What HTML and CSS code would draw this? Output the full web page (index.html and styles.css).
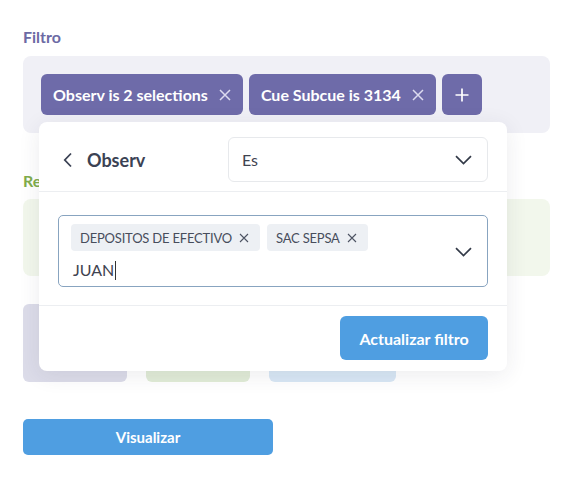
FILE: index.html
```html
<!DOCTYPE html>
<html lang="es">
<head>
<meta charset="utf-8">
<title>Filtro</title>
<link rel="stylesheet" href="styles.css">
</head>
<body>
<div class="page">
  <div class="section-label label-filter">Filtro</div>
  <div class="filter-box">
    <div class="chip">Observ is 2 selections
      <svg class="chip-x" width="12" height="12" viewBox="0 0 12 12"><path d="M1 1L11 11M11 1L1 11" stroke="#dcdbef" stroke-width="1.5" fill="none"/></svg>
    </div>
    <div class="chip">Cue Subcue is 3134
      <svg class="chip-x" width="12" height="12" viewBox="0 0 12 12"><path d="M1 1L11 11M11 1L1 11" stroke="#dcdbef" stroke-width="1.5" fill="none"/></svg>
    </div>
    <div class="chip chip-add">
      <svg width="14" height="14" viewBox="0 0 14 14"><path d="M7 0.5V13.5M0.5 7H13.5" stroke="#fff" stroke-width="1.7" fill="none"/></svg>
    </div>
  </div>

  <div class="section-label label-result">Resumen</div>
  <div class="result-box"></div>

  <div class="cards">
    <div class="card card-purple"></div>
    <div class="card card-green"></div>
    <div class="card card-blue"></div>
  </div>

  <button class="btn btn-visualizar">Visualizar</button>

  <div class="popover">
    <div class="pop-header">
      <div class="pop-title">
        <svg width="10" height="16" viewBox="0 0 10 16"><path d="M8 1.5L1.8 8L8 14.5" stroke="#3b4254" stroke-width="1.8" fill="none"/></svg>
        <span>Observ</span>
      </div>
      <div class="select">
        <span>Es</span>
        <svg class="chev" width="17" height="10" viewBox="0 0 17 10"><path d="M1 1.2L8.5 8.5L16 1.2" stroke="#333a48" stroke-width="1.7" fill="none"/></svg>
      </div>
    </div>
    <div class="pop-body">
      <div class="multi">
        <div class="multi-values">
          <span class="tag">DEPOSITOS DE EFECTIVO
            <svg class="tag-x" width="10" height="10" viewBox="0 0 10 10"><path d="M1 1L9 9M9 1L1 9" stroke="#4d5363" stroke-width="1.1" fill="none"/></svg>
          </span>
          <span class="tag">SAC SEPSA
            <svg class="tag-x" width="10" height="10" viewBox="0 0 10 10"><path d="M1 1L9 9M9 1L1 9" stroke="#4d5363" stroke-width="1.1" fill="none"/></svg>
          </span>
          <span class="typed">JUAN<span class="caret"></span></span>
        </div>
        <svg class="chev" width="17" height="10" viewBox="0 0 17 10"><path d="M1 1.2L8.5 8.5L16 1.2" stroke="#333a48" stroke-width="1.7" fill="none"/></svg>
      </div>
    </div>
    <div class="pop-footer">
      <button class="btn btn-update">Actualizar filtro</button>
    </div>
  </div>
</div>
</body>
</html>
```

FILE: styles.css
```css
* { box-sizing: border-box; }
html, body { margin: 0; background: #fff; }
body { font-family: Lato, "Open Sans", sans-serif; }

.page {
  position: relative;
  padding: 28px 16px 40px 23px;
}

.section-label {
  font-size: 16px;
  font-weight: 700;
  line-height: 18px;
}
.label-filter { color: #6c6aa4; }
.label-result { color: #80ad4b; margin-top: 39px; }

.filter-box {
  margin-top: 10px;
  background: #f0f0f6;
  border-radius: 8px;
  padding: 18px;
  display: flex;
  gap: 6px;
  height: 77px;
}

.chip {
  height: 41px;
  background: #6e6ba9;
  color: #fff;
  border-radius: 6px;
  padding: 0 12px 0 12px;
  display: flex;
  align-items: center;
  font-size: 16px;
  font-weight: 700;
  white-space: nowrap;
}
.chip-x { margin-left: 11px; }
.chip-add {
  width: 40px;
  padding: 0;
  justify-content: center;
}

.result-box {
  margin-top: 9px;
  height: 77px;
  background: #f2f7ec;
  border-radius: 8px;
}

.cards {
  margin-top: 28px;
  display: flex;
  gap: 19px;
}
.card { height: 78px; border-radius: 6px; }
.card-purple { width: 104px; background: #dcdce9; }
.card-green { width: 104px; background: #e1ecd7; }
.card-blue { width: 127px; background: #d8e7f5; }

.btn {
  border: none;
  font-family: Lato, "Open Sans", sans-serif;
  font-weight: 700;
  color: #fff;
  background: #4f9ee1;
}
.btn-visualizar {
  display: block;
  margin-top: 37px;
  width: 250px;
  height: 36px;
  border-radius: 5px;
  font-size: 15px;
}

.popover {
  position: absolute;
  left: 39px;
  top: 122px;
  width: 468px;
  height: 249px;
  background: #fff;
  border-radius: 8px;
  box-shadow: 0 4px 22px rgba(40, 45, 70, 0.09);
  display: flex;
  flex-direction: column;
}

.pop-header {
  display: flex;
  align-items: center;
  justify-content: space-between;
  padding: 15px 19px 9px 24px;
  border-bottom: 1px solid #eceef1;
}
.pop-title {
  display: flex;
  align-items: center;
  gap: 14px;
  font-size: 18px;
  font-weight: 700;
  color: #3b4254;
}
.select {
  width: 260px;
  height: 45px;
  border: 1px solid #e7e9ec;
  border-radius: 6px;
  display: flex;
  align-items: center;
  justify-content: space-between;
  padding: 0 15px 0 13px;
  font-size: 16px;
  color: #3f4350;
}

.pop-body {
  padding: 23px 19px 18px;
  border-bottom: 1px solid #eceef1;
}
.multi {
  height: 72px;
  border: 1px solid #88a4c0;
  border-radius: 5px;
  display: flex;
  align-items: center;
  padding: 8px 15px 6px 12px;
}
.multi-values {
  flex: 1;
  display: flex;
  flex-wrap: wrap;
  align-content: flex-start;
  gap: 0 7px;
  align-self: stretch;
}
.tag {
  height: 27px;
  background: #edf0f4;
  border-radius: 4px;
  padding: 0 11px 0 9px;
  display: inline-flex;
  align-items: center;
  font-size: 13px;
  letter-spacing: -0.2px;
  color: #474d5c;
}
.tag-x { margin-left: 7px; }
.typed {
  width: 100%;
  font-size: 16px;
  color: #3f4350;
  line-height: 22px;
  margin-top: 8px;
  padding-left: 2px;
  display: flex;
  align-items: center;
}
.caret {
  display: inline-block;
  width: 1px;
  height: 19px;
  background: #333;
  margin-left: 1px;
}

.pop-footer {
  display: flex;
  justify-content: flex-end;
  padding: 10px 19px 11px;
}
.btn-update {
  width: 148px;
  height: 44px;
  border-radius: 6px;
  font-size: 16px;
}
```
